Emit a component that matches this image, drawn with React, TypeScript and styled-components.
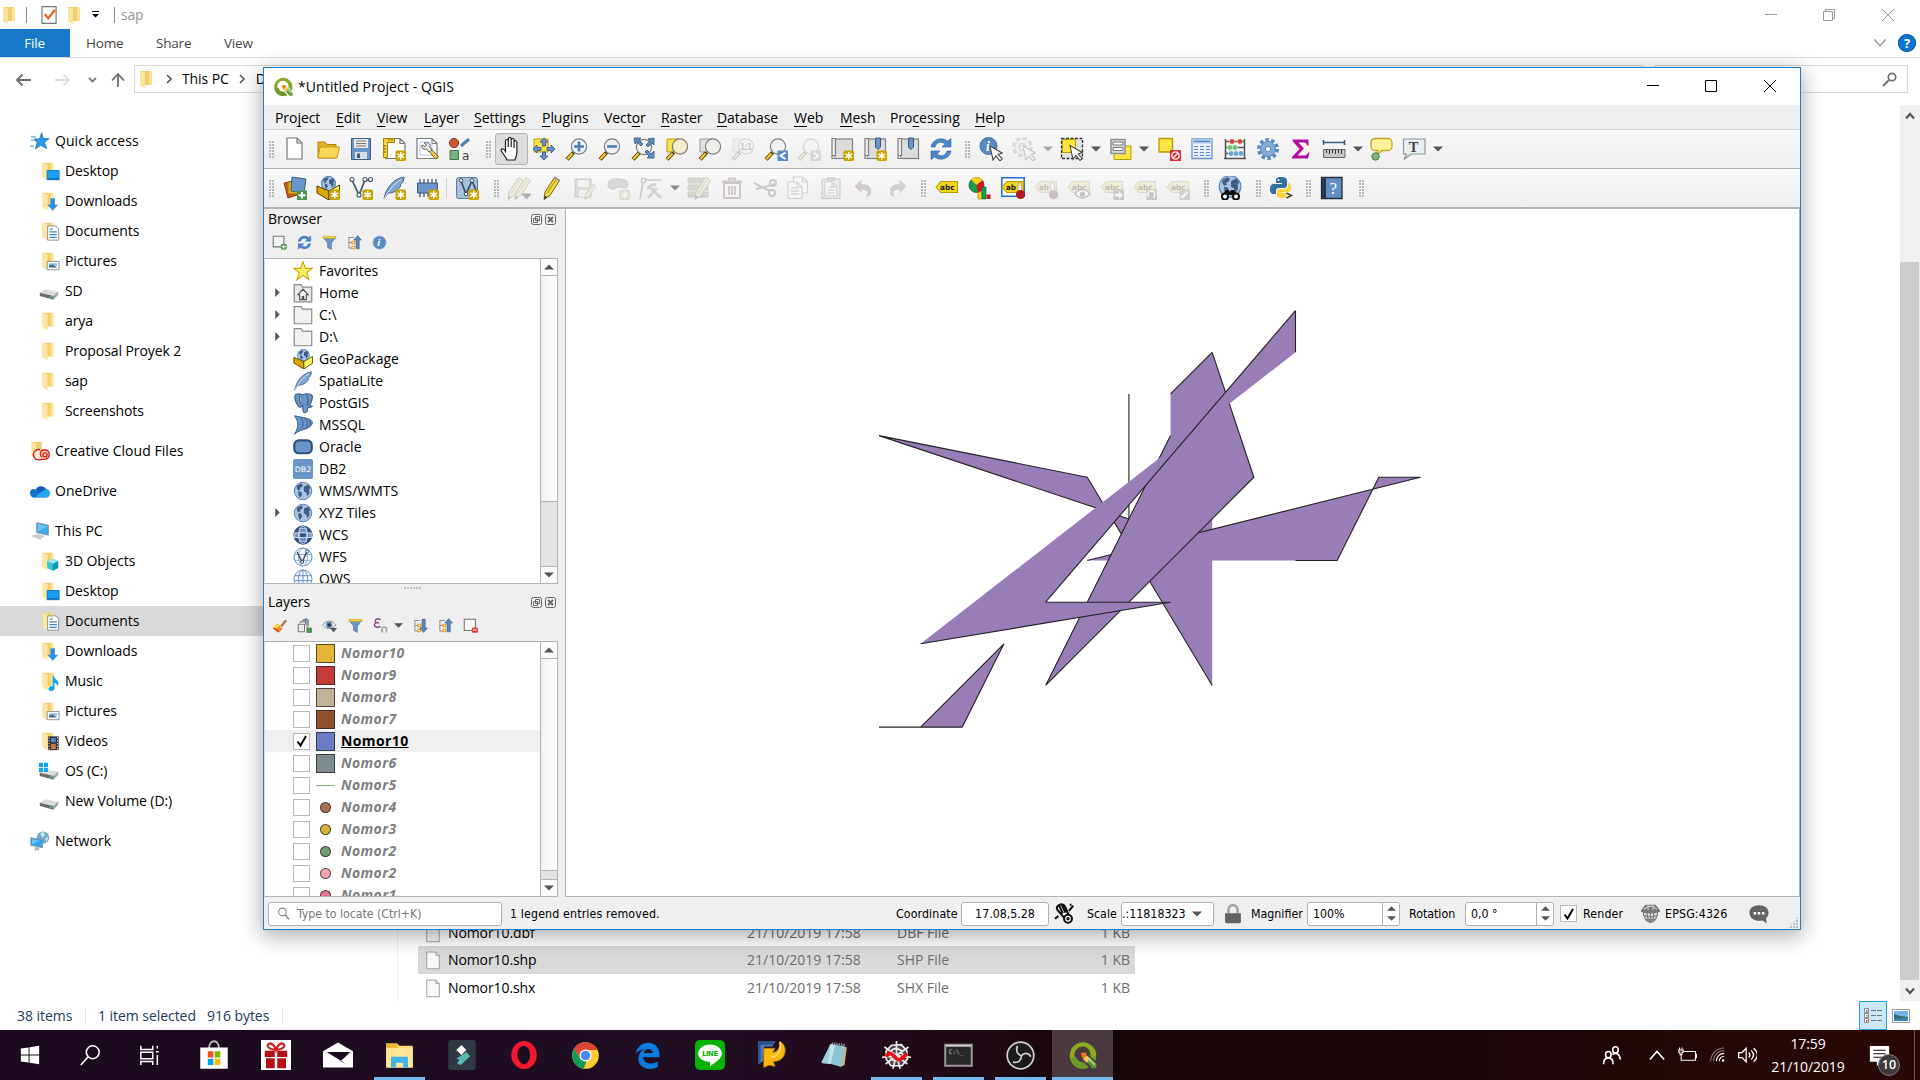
import React from "react";
import styled, { createGlobalStyle, css } from "styled-components";

const ui = `"Open Sans", "Noto Sans", sans-serif`;
const small = `"DejaVu Sans Condensed", "DejaVu Sans", sans-serif`;

const GlobalStyle = createGlobalStyle`
  * { box-sizing: border-box; }
  html, body { margin: 0; padding: 0; overflow: hidden; background: #fff; }
  svg { display: block; flex: none; }
`;

/* ---------- icon drawings (24 x 24 unless noted) ---------- */

const Star = () => (
  <g>
    <rect x="13.5" y="13.5" width="10.5" height="10.5" rx="1.8" fill="#c8a200" />
    <path d="M18.75 15v7.5M15.4 16.9l6.7 3.8M15.4 20.7l6.7-3.8" stroke="#fff" strokeWidth="1.5" />
  </g>
);
const Glass = ({ cx = 14, cy = 9.5, r = 7.6, fill = "#f2f2f0" }: { cx?: number; cy?: number; r?: number; fill?: string }) => (
  <g>
    <path d="M8.5 15.5L2 22.5" stroke="#3a2d00" strokeWidth="4" />
    <path d="M7.6 16.4L2.2 22.2" stroke="#f5c62c" strokeWidth="2.4" />
    <circle cx={cx} cy={cy} r={r} fill={fill} stroke="#7c7c7c" strokeWidth="1.2" />
  </g>
);
const Pencil = () => (
  <g>
    <path d="M5 16L14.5 1.5l5 3L10 19.5l-6 4z" fill="#f3dc3c" stroke="#6b6222" strokeWidth="1" />
    <path d="M7 17.5L16.5 3" stroke="#b79a12" strokeWidth="1.3" />
    <path d="M4 23.5l.7-4 2.4 1.6z" fill="#333" />
    <path d="M14.5 1.5l5 3" stroke="#999" strokeWidth="2" />
  </g>
);
const Globe = ({ cx = 12, cy = 12, r = 10.5 }: { cx?: number; cy?: number; r?: number }) => (
  <g>
    <circle cx={cx} cy={cy} r={r} fill="#a9c4e0" stroke="#5c84b1" strokeWidth="1.2" />
    <g transform={`translate(${cx - r} ${cy - r}) scale(${r / 10})`} fill="#3c5d86">
      <path d="M3 4l5-2.5 2 1.5-1.5 2.5-2 1 .5 2-2.5.5L3 7z" />
      <path d="M4.5 10l3.5 1 1 3-2.5 4-1.5-3z" />
      <path d="M11 5l5-2.5 2.5 4L17 8l.5 4-2.5 4-1.5-4.5-2.5-1z" />
    </g>
  </g>
);
const Tag = ({ text = "abc", y = 6 }: { text?: string; y?: number }) => (
  <g>
    <path d={`M1 ${y + 5}l5-5.5h16.5v11H6z`} fill="#f2d71c" stroke="#b99b00" strokeWidth="1.1" />
    <text x="5" y={y + 7.8} fontSize="7.6" fontWeight="700" fontFamily="DejaVu Sans, sans-serif" fill="#222" textLength={text === "abc" ? 14.5 : 10} lengthAdjust="spacingAndGlyphs">{text}</text>
  </g>
);
const Page = ({ x = 4, y = 1, w = 15, h = 21 }: { x?: number; y?: number; w?: number; h?: number }) => (
  <path d={`M${x} ${y}h${w - 5}l5 5v${h - 5}h-${w}zM${x + w - 5} ${y}v5h5`} fill="#fff" stroke="#777" strokeWidth="1.2" />
);
const Book = () => (
  <g>
    <rect x="4.5" y="2" width="18" height="19.5" fill="#dcdcdc" stroke="#808080" strokeWidth="1.2" />
    <path d="M2 1.5h3.5v17H2z M2 18.5v3h4" fill="#eee" stroke="#808080" strokeWidth="1.2" />
  </g>
);
const Folder = () => (
  <g>
    <path d="M5 3h11v15H5z" fill="#f1cf71" />
    <path d="M5 3l5.5 2v17L5 19z" fill="#fde6a0" />
    <path d="M14 4h3v14h-3z" fill="#ffe492" />
  </g>
);
const Disk = () => (
  <g>
    <path d="M2 14l6-4 14 2.5-5 5z" fill="#dcdcdc" />
    <path d="M2 14l15 3.5v4L2 17.500z" fill="#6d6d6d" />
    <path d="M17 17.500l5-5v3.500l-5 5.500z" fill="#a2a2a2" />
    <path d="M13 18.600h2.500" stroke="#47e05d" strokeWidth="1.4" />
  </g>
);
const QLogo = () => (
  <g>
    <path d="M12.500 1a11 11 0 1 0 4.500 21l-3.600-4.200A6.700 6.700 0 1 1 18.700 11.500l4.600 1.800A11 11 0 0 0 12.500 1z" fill="#8bab20" />
    <path d="M2 14a11 11 0 0 0 15 8l-3.600-4.200A6.700 6.700 0 0 1 6.500 13z" fill="#6a9a27" />
    <path d="M17.500 11.500l5 5a11 11 0 0 0 .8-4z" fill="#7ba428" />
    <path d="M15 17l3-3.500 5.500 5.500v3.500h-3.500z" fill="#589632" />
    <path d="M10.500 10l4.500-.5.500 3-3 2.500z" fill="#ee7913" />
    <path d="M12.500 15l3-3 3 2.500-3 3.500z" fill="#f8c95a" />
    <path d="M16.500 15.500l1.300-1.500 5 5-1 1.500z" fill="#a8c77c" />
  </g>
);
const Arrows = () => <path d="M12 1l4 4h-2.500v4h-3V5H8zM12 23l4-4h-2.500v-4h-3v4H8zM1 12l4-4v2.500h4v3H5V16zM23 12l-4-4v2.500h-4v3h4V16z" fill="#6a95c8" stroke="#3c5d86" strokeWidth=".9" />;
const Refresh = () => (
  <g fill="#4c86c6" stroke="#2f66a5" strokeWidth=".6">
    <path d="M2 10C3 3 12-1 18.500 4L22 1.500V10h-9l3-3C12 4 7.500 5 6 10z" />
    <path d="M22 14c-1 7-10 11-16.500 6L2 22.500V14h9l-3 3c4 3 8.500 2 10-3z" />
  </g>
);
const Cursor = ({ t = "" }: { t?: string }) => <path transform={t} d="M11 9l3 14 3-4 4 5 2.200-2-4-4.500 4-1.500z" fill="#fff" stroke="#444" strokeWidth="1.100" />;
const Funnel = () => (
  <g>
    <path d="M2 4h20l-7 9v10l-6-3v-7z" fill="#6a95c8" stroke="#4d6f97" />
    <path d="M2 2h20v3.500H2z" fill="#f3d63a" stroke="#b69a18" strokeWidth=".8" />
  </g>
);
const TreeArrow = ({ down }: { down?: boolean }) => (
  <g>
    <path d="M3 3v18M3 4h8M3 12h7M3 21h8" stroke="#8a8a8a" strokeWidth="1.500" fill="none" />
    <path d="M8 10h4v4H8zM8 18h4v4H8z" fill="#fff" stroke="#f09a1a" strokeWidth="1.800" />
    <path transform={down ? "rotate(180 17 12)" : ""} d="M17 1l6 7h-3.500v14h-5V8H11z" fill="#5a8ac4" stroke="#34587f" />
  </g>
);
const Feather = () => (
  <g>
    <path d="M2 23C4 12 11 3 22 1c0 5-2 6-4 8 1 0 1 1 0 2-4 5-8 6-12 6z" fill="#7fa5d0" stroke="#3c5d86" />
    <path d="M2 23C6 15 12 8 19 3" stroke="#dce8f4" fill="none" />
  </g>
);
const VecLine = () => (
  <g fill="none" stroke="#44546a" strokeWidth="1.700">
    <path d="M3 4l7 15 6-15h4" />
    <g fill="#fff" strokeWidth="1.100"><circle cx="3" cy="3.500" r="2" /><circle cx="10" cy="19" r="2" /><circle cx="16" cy="3.500" r="2" /><circle cx="21.500" cy="3.500" r="2" /></g>
  </g>
);

const icons: Record<string, React.ReactNode> = {
  folder: <Folder />,
  desktopF: <g><Folder /><rect x="10" y="11.500" width="13" height="10" fill="#18a0f4" stroke="#1173bd" /><path d="M11 20.500h11" stroke="#0a5ea0" /></g>,
  downloads: <g><Folder /><path d="M13.500 9h5v7h3.500l-6 6.500-6-6.500h3.500z" fill="#3091e0" /></g>,
  documents: <g><Folder /><path d="M10.500 6.500h9l3 3V22h-12z" fill="#fff" stroke="#8b8b8b" /><path d="M13 10h3M12.500 13h8M12.500 16h8M12.500 19h8" stroke="#3d88c7" strokeWidth="1.300" /></g>,
  pictures: <g><Folder /><path d="M10 12.500h13v9H10z" fill="#fff" stroke="#8b8b8b" /><path d="M12 14.500h9v2.500h-9z" fill="#7fb9e8" /><path d="M12 17l4-1 5 3H12z" fill="#35678c" /></g>,
  music: <g><Folder /><path d="M17 6c.5 4 5 4.500 5.500 8.500-.5 2-1 2.500-1.500 3 0-3-2-3.500-3-4v6.500c0 3.500-6.500 4-6.500.500 0-2.500 3-3.500 4.500-2.500V6z" fill="#12a2f3" /></g>,
  videos: <g><Folder /><path d="M11 7h11.500v15H11z" fill="#262626" /><path d="M14 8.500h5.500v5H14z" fill="#4d88cf" /><path d="M14 15h5.500v6H14z" fill="#c4793d" /><path d="M12.200 8v14M21.200 8v14" stroke="#fff" strokeDasharray="1.500 1.500" /></g>,
  objects3d: <g><Folder /><path d="M16 9.500l6 2.500v7.500l-6 3-6-3V12z" fill="#3bc4d8" /><path d="M16 15v7.500l6-3V12z" fill="#1796b4" /><path d="M10 12l6-2.500 6 2.500-6 3z" fill="#9ceaf2" /></g>,
  disk: <Disk />,
  diskOs: <g><Disk /><path d="M1 3h4.500v4.500H1zM6.500 3H11v4.500H6.500zM1 8.500h4.500V13H1zM6.500 8.500H11V13H6.500z" fill="#14a7ee" /></g>,
  quick: <g><path d="M14 2l2 7h7l-5.500 4.500L20 21l-7-4-6.500 4.500 2-7.500L5 9.500h6.500z" fill="#2b9be6" stroke="#1878c4" /><path d="M1 7h6M1 11h5M0 18h5" stroke="#57b1ec" strokeWidth="1.500" /></g>,
  creative: <g><path d="M2 1h12v16H2z" fill="#f1cf71" /><path d="M2 1l5.500 2v18L2 18z" fill="#fde6a0" /><g fill="none" stroke="#e0211b" strokeWidth="1.700"><path d="M12 10.500a6.200 6.200 0 1 0 1 11.500h5a5.800 5.800 0 0 0 0-11.500c-4 0-5.500 2-5.500 5.500 0 2 1 3 2 3.500" fill="#ffe8d8" /><circle cx="18" cy="16.500" r="2.600" /></g></g>,
  onedrive: <g><path d="M7 10a7 6.500 0 0 1 12.500-.5L12 17z" fill="#0f5bb5" /><path d="M0 14.500C0 11 3 9 6 10l9 6-10 4c-3 0-5-2.500-5-5.500z" fill="#1273d0" /><path d="M19 9.500c3.500 0 5 2.500 5 5.500s-2 5-4.500 5H5l8.500-7z" fill="#28a4ea" /></g>,
  pc: <g><path d="M8 2l14 3v12L8 14z" fill="#3fa8ec" stroke="#7d8b96" /><path d="M9.500 4l11 2.500-11 6z" fill="#70c5f7" /><path d="M1 18l8-2.500 9 2.500-6 4.500z" fill="#c7cdd2" /></g>,
  network: <g><circle cx="15.500" cy="8" r="7.500" fill="#78a8c7" /><path d="M12 3l4-2 2 4-3 3zM18 9l4-2-2 6z" fill="#c2e6ec" /><path d="M1 8l14 3v9L1 17z" fill="#2fa4ec" stroke="#7d8b96" /><path d="M2.500 10l9 2-9 4z" fill="#6cc4f7" /><path d="M7 19l4 1v3H5z" fill="#aab4bb" /></g>,
  file: <g><path d="M4.500 2.500h11l4 4v16h-15z" fill="#f7f9fb" stroke="#8f8f8f" /><path d="M15.500 2.500v4h4" fill="none" stroke="#8f8f8f" /></g>,
  checkdoc: <g><path d="M3.500 2h17v20h-17z" fill="#fafafa" stroke="#777" strokeWidth="1.400" /><path d="M7 11l4 5 8-10" fill="none" stroke="#ef5a13" strokeWidth="2.600" /></g>,

  newp: <Page />,
  open: <g><path d="M2 5h7l2 2.500h9V21H2z" fill="#e3b324" stroke="#a88308" /><path d="M4 10h19.500L21 21H2z" fill="#fcd757" stroke="#c29a1a" /></g>,
  save: <g><path d="M2.500 1.500h19v21h-19z" fill="#6a95c8" stroke="#3c5d86" /><path d="M5 2h14v9H5z" fill="#e9e9e9" /><path d="M7 4h10M7 6.500h10M7 9h10" stroke="#777" /><path d="M6 15h12v7H6z" fill="#d9dce0" /><path d="M8 16.500h3V21H8z" fill="#3c5d86" /></g>,
  layout: <g><Page x={4} y={1.500} w={19} h={20} /><path d="M1.500 1.500h11v4h-7v15h-4z" fill="#f7d23a" stroke="#a88308" /><path d="M7 2v2M10 2v2M2 9h2M2 12h2M2 15h2" stroke="#6f5800" /><Star /></g>,
  wrench: <g><Page x={2} y={1.500} w={20} h={20} /><path d="M5 5h12v13H5z" fill="none" stroke="#b7cbe6" /><path d="M13 13l7.500 9 3-2-8-9z" fill="#f2c94c" stroke="#7d641a" /><path d="M9 6c4-1.500 7 1 6 4l2 3-3 2-3-3c-3 1-5-1-4-4l3 1.500 1.500-1.500z" fill="#e2e2e2" stroke="#666" /></g>,
  style: <g><circle cx="6" cy="6" r="4.600" fill="#cc5a36" stroke="#8a3518" /><path d="M13 9l8-7" stroke="#5580b6" strokeWidth="3.200" /><path d="M2 13.500h8.500v9H2z" fill="#7bb085" stroke="#3f7a4a" /><text x="14" y="22.500" fontSize="12" fontFamily="DejaVu Sans, sans-serif" fill="#444">a</text></g>,
  hand: <path d="M8 23c-1-3-5-7-6-10 1-2 3-1 4.500 1.500V4c0-2 2.800-2 2.800 0V2c0-2 2.900-2 2.900 0v1c0-2 2.900-2 2.900 0v2c0-2 2.800-1.500 2.800.5V15c0 3-1 5-2 8z M9.300 4v6M12.200 3v7M15.100 4.500V11" fill="#fff" stroke="#222" strokeWidth="1.200" />,
  panto: <g><path d="M2 2h14v13H2z" fill="#fbe04c" stroke="#b99b00" /><Arrows /></g>,
  zoomin: <g><Glass fill="#eef2f7" /><path d="M14 4.500v10M9 9.500h10" stroke="#4c7db8" strokeWidth="2.600" /></g>,
  zoomout: <g><Glass fill="#eef2f7" /><path d="M9 9.500h10" stroke="#4c7db8" strokeWidth="2.600" /></g>,
  zoomfull: <g><Glass cx={13} cy={10} /><path d="M3 1h7L8 3l4 4-2 2-4-4-2 2zM23 1v7l-2-2-4 4-2-2 4-4-2-2zM23 21h-7l2-2-4-4 2-2 4 4 3-3z" fill="#5f8dc4" stroke="#3c5d86" strokeWidth=".9" /></g>,
  zoomsel: <g><path d="M2 2h12v13H2z" fill="#fbe04c" stroke="#b99b00" /><Glass fill="#f3eecb" cx={15} /></g>,
  zoomlay: <g><path d="M2 2h12v13H2z" fill="#e2e2e2" stroke="#999" /><Glass fill="#eeeeea" cx={15} /></g>,
  native: <g><path d="M2 2h12v13H2z" fill="#ddd" stroke="#999" /><Glass cx={15} /><text x="8.500" y="13" fontSize="9.500" fontWeight="700" fontFamily="DejaVu Sans Condensed, sans-serif" fill="#555" textLength="13">1:1</text></g>,
  zoomlast: <g><Glass /><path d="M13.500 13.500H24V24H13.500z" fill="#5a8ac4" /><path d="M21.500 15.500l-5 3.200 5 3.300" stroke="#fff" strokeWidth="1.800" fill="none" /></g>,
  zoomnext: <g><Glass /><path d="M13.500 13.500H24V24H13.500z" fill="#888" /><path d="M16.500 15.500l5 3.200-5 3.300" stroke="#fff" strokeWidth="1.800" fill="none" /></g>,
  book1: <g><Book /><Star /></g>,
  book2: <g><Book /><path d="M12.500 1h5v9l-2.500 2.500-2.500-2.500z" fill="#6a95c8" stroke="#34587f" /><Star /></g>,
  book3: <g><Book /><path d="M12.500 1h5v9l-2.500 2.500-2.500-2.500z" fill="#6a95c8" stroke="#34587f" /></g>,
  refresh: <Refresh />,
  identify: <g><circle cx="9.500" cy="9" r="8.500" fill="#5a8ac4" stroke="#3c6da8" /><text x="7" y="14" fontSize="14" fontStyle="italic" fontWeight="700" fontFamily="Liberation Serif, serif" fill="#fff">i</text><Cursor /></g>,
  action: <g><circle cx="10.500" cy="10" r="9" fill="none" stroke="#888" strokeWidth="2.600" strokeDasharray="4.500 2.569" /><circle cx="10.500" cy="10" r="7.500" fill="#eee" stroke="#888" /><circle cx="10.500" cy="10" r="4.500" fill="#999" /><path d="M9 7l5 3-5 3z" fill="#fff" /><Cursor /></g>,
  select: <g><path d="M1.500 1.500h21v20h-21z" fill="#e3e3e3" stroke="#333" strokeWidth="1.300" strokeDasharray="3 1.500" /><path d="M2.500 2.500h13v13h-13z" fill="#fde545" stroke="#b99b00" /><Cursor t="translate(-1 -.5)" /></g>,
  selval: <g><path d="M6 9h17v13.500H6z" fill="#fde545" stroke="#b99b00" /><path d="M3 2.500h14v14H3z" fill="#ddd" stroke="#8a9096" strokeWidth="1.500" /><path d="M5 5h10v3H5zM5 10.500h10v3H5z" fill="#fff" stroke="#777" /></g>,
  deselect: <g><path d="M2 1.500h13.500V15H2z" fill="#fde545" stroke="#b99b00" strokeWidth="1.300" /><path d="M13 13h11v11H13z" fill="#d83333" /><circle cx="18.500" cy="18.500" r="3.700" fill="none" stroke="#fff" strokeWidth="1.300" /><path d="M16 21l5-5" stroke="#fff" strokeWidth="1.300" /></g>,
  table: <g><path d="M2 2h20v19.500H2z" fill="#e9f0f8" stroke="#6a95c8" strokeWidth="1.300" /><path d="M2 2h20v4.500H2z" fill="#a9c9ea" /><path d="M4 9.500h4M10 9.500h4M16 9.500h4M4 12.500h4M10 12.500h4M16 12.500h4M4 15.500h4M10 15.500h4M16 15.500h4M4 18.500h4M10 18.500h4M16 18.500h4M4 4.300h16" stroke="#5a8ac4" strokeWidth="1.200" /></g>,
  abacus: <g><path d="M2.500 2v20M21.500 2v20M1 21.500h22M3 4.500h18M3 10.500h18M3 16.500h18" stroke="#555" strokeWidth="1.500" /><g stroke="#fff" strokeWidth=".5"><g fill="#dc3d3d"><circle cx="9" cy="4.500" r="2.700" /><circle cx="17" cy="4.500" r="2.700" /></g><g fill="#6ac46e"><circle cx="7" cy="10.500" r="2.700" /><circle cx="12" cy="10.500" r="2.700" /></g><g fill="#66a3cf"><circle cx="8" cy="16.500" r="2.700" /><circle cx="13" cy="16.500" r="2.700" /><circle cx="18" cy="16.500" r="2.700" /></g></g></g>,
  gear: <g><circle cx="12" cy="12" r="9" fill="none" stroke="#5a8ac4" strokeWidth="4" strokeDasharray="3.400 2.254" /><circle cx="12" cy="12" r="7.500" fill="#86abd8" stroke="#5a8ac4" /><circle cx="12" cy="12" r="2.600" fill="#fff" stroke="#5a8ac4" /></g>,
  sigma: <path d="M3.500 2.500h16v6h-1.500c-.5-2.500-1.500-3-3.500-3H9.500l5.500 6-6.500 7h7c2 0 2.800-.8 3.500-3h1.500l-1.500 6h-16v-1.500l7.500-8L3.500 4z" fill="#b0119c" />,
  measure: <g><path d="M1.500 5.500h21M1.500 3v5M22.500 3v5" stroke="#3c5d86" strokeWidth="1.600" /><path d="M1.500 12.500h21.500v8H1.500z" fill="#c9c9c9" stroke="#666" /><path d="M4.500 13v3M7.500 13v4M10.500 13v3M13.500 13v4M16.500 13v3M19.500 13v4" stroke="#333" /></g>,
  tip: <g><path d="M6 1.500h13a4 4 0 0 1 4 4v4a4 4 0 0 1-4 4h-6l-6 5 2-5H6a4 4 0 0 1-4-4v-4a4 4 0 0 1 4-4z" fill="#fdf29a" stroke="#c2a31c" strokeWidth="1.300" /><circle cx="6.500" cy="19.500" r="3.700" fill="#7bb57a" stroke="#477f47" /></g>,
  textann: <g><path d="M1.500 2h21.500v15H9l-7 5.500L4.500 17h-3z" fill="#e8eff3" stroke="#8e979c" strokeWidth="1.200" /><text x="6.800" y="14.500" fontSize="14.500" fontWeight="700" fontFamily="Liberation Serif, serif" fill="#444">T</text></g>,

  addlayer: <g><path d="M1 7l9-2 4 14-9 3z" fill="#cf5b1e" stroke="#8d3a0d" /><path d="M5 6h11v12H5z" fill="#eaaa14" stroke="#94690a" /><path d="M9 1l14 2-2 14-13-2z" fill="#6a95c8" stroke="#3c5d86" /><path d="M14 14.500h10V24H14z" fill="#4f9450" /><path d="M19 16v6.500M15.700 19.200h6.600" stroke="#fff" strokeWidth="1.900" /></g>,
  geopack: <g><Globe cx={12.500} cy={7.500} r={7} /><path d="M1 10l12 5v9L1 17z" fill="#dca800" stroke="#4f3f00" /><path d="M13 15l10.500-6v8L13 24z" fill="#fff06a" stroke="#4f3f00" /></g>,
  geopackS: <g><Globe cx={12.500} cy={7.500} r={7} /><path d="M1 10l12 5v9L1 17z" fill="#dca800" stroke="#4f3f00" /><path d="M13 15l10.500-6v8L13 24z" fill="#fff06a" stroke="#4f3f00" /><Star /></g>,
  shape: <g><VecLine /><Star /></g>,
  featherS: <g><Feather /><Star /></g>,
  feather: <Feather />,
  chip: <g><path d="M5 3v18M9 3v18M13 3v18M17 3v18M21 3v18" stroke="#44546a" strokeWidth="1.300" /><path d="M2.500 7h20v10h-20z" fill="#6a95c8" stroke="#3c5d86" /><Star /></g>,
  virtual: <g><rect x="1.500" y="1.500" width="21" height="21" rx="2" fill="#a6c1df" stroke="#5a7ca6" /><path d="M6 5l5 13 6-13 4 9" fill="none" stroke="#33475f" strokeWidth="1.600" /><g fill="#fff" stroke="#33475f"><circle cx="6" cy="4.500" r="1.800" /><circle cx="11" cy="18" r="1.800" /><circle cx="17" cy="4.500" r="1.800" /></g><Star /></g>,
  pencils: <g><g transform="translate(4 0)"><Pencil /></g><g transform="translate(-3 0)"><Pencil /></g><path d="M15 18h9l-4.500 5z" fill="#000" stroke="#000" /></g>,
  pencil: <Pencil />,
  saveed: <g><path d="M2 3h16v18H2z" fill="#999" stroke="#555" /><path d="M5 4h11v7H5zM6 14h8v7H6z" fill="#eee" /><g transform="translate(9 7) scale(.7)"><Pencil /></g></g>,
  addfeat: <g><path d="M2 8c1-7 10-5 12-5s9 1 8 6-6 2-9 2-4 3-7 2-4-2-4-5z" fill="#888" stroke="#555" /><Star /></g>,
  vertex: <g fill="none" stroke="#555" strokeWidth="1.500"><path d="M4 6L1 23M6 4h16" /><path d="M2.500 2.500h4v4h-4z" /><path d="M9 22L18 12" strokeWidth="3" stroke="#888" /><path d="M12 12l10 10" strokeWidth="3" stroke="#777" /><path d="M9 13c1-4 5-5 8-4" strokeWidth="3" stroke="#777" /></g>,
  multi: <g><path d="M1 2h20v5H1zM1 9h20v5H1zM1 16h20v5H1z" fill="#8a8d50" stroke="#666" /><g transform="translate(4 0)"><Pencil /></g></g>,
  trash: <g fill="none" stroke="#8a4040" strokeWidth="1.800"><path d="M4 7h16v15H4zM2 5.500h20M9 5V2.500h6V5M9 10v9M12 10v9M15 10v9" /></g>,
  cut: <g fill="none" stroke="#555" strokeWidth="2"><path d="M1 7l16 8M3 13l19-5" /><circle cx="19" cy="17" r="3" /><circle cx="20" cy="7" r="3" /></g>,
  copy: <g><Page x={7.500} y={1} w={14} h={16} /><Page x={2} y={6} w={14} h={16.500} /><path d="M5 12h6M5 15h8M5 18h8" stroke="#555" /></g>,
  paste: <g><path d="M3 3h18v19.500H3z" fill="#ccc" stroke="#555" /><path d="M8 1h8v4H8z" fill="#777" /><Page x={6} y={6} w={12} h={14} /><path d="M8.500 11h6M8.500 14h7M8.500 17h7" stroke="#555" /></g>,
  undo: <path d="M2.500 10l7-6.500v4.500c8 0 11 3.500 9 11.500-1-1-2 2-5 2 4-5 2-8-4-8v4z" fill="#8d5a4d" />,
  redo: <path transform="translate(24 0) scale(-1 1)" d="M2.500 10l7-6.500v4.500c8 0 11 3.500 9 11.500-1-1-2 2-5 2 4-5 2-8-4-8v4z" fill="#5c7a6c" />,
  abc: <Tag />,
  diagram: <g><circle cx="8.500" cy="9" r="7.500" fill="#13a14b" stroke="#333" strokeWidth=".7" /><path d="M8.500 9L3 3.500A7.500 7.500 0 0 1 14.500 4.500z" fill="#fcd116" /><path d="M8.500 9l6-4.500a7.500 7.500 0 0 1-5 12z" fill="#d3191c" /><path d="M10 16h4v7h-4z" fill="#fcd116" stroke="#a17f00" strokeWidth=".6" /><path d="M14 11h4v12h-4z" fill="#13a14b" stroke="#064" strokeWidth=".6" /><path d="M18.500 18.500h4V23h-4z" fill="#d3191c" /></g>,
  abpin: <g><path d="M.8 1.800h22.400v18.500H.8z" fill="#fff" stroke="#1b6fd8" strokeWidth="1.500" /><Tag text="ab" /><path d="M17 8l3-2 1 10h-4z" fill="#eee" stroke="#888" strokeWidth=".6" /><circle cx="19.500" cy="18.500" r="4.600" fill="#b3181c" /></g>,
  abpinG: <g><Tag text="ab" /><path d="M16 8l4-2 1 10h-4z" fill="#eee" stroke="#888" /><circle cx="19.500" cy="18.500" r="4.600" fill="#8a2d3d" /></g>,
  abeye: <g><Tag /><path d="M8 18c4-6 11-6 15 0-4 5-11 5-15 0z" fill="#fff" stroke="#444" strokeWidth="1.500" /><circle cx="15.500" cy="18" r="2.600" fill="#444" /></g>,
  abmove: <g><Tag /><path d="M13.500 13.500H24V24H13.500z" fill="#555" /><path d="M15 17.500h4V15l4 4-4 4v-2.500h-4z" fill="#fff" /></g>,
  abrot: <g><Tag /><path d="M13.500 13.500H24V24H13.500z" fill="#555" /><path d="M16 21a3.500 3.500 0 1 1 4 .5" stroke="#fff" strokeWidth="1.700" fill="none" /></g>,
  abedit: <g><Tag /><path d="M13.500 13.500H24V24H13.500z" fill="#77774f" /><path d="M15.500 22l6-6" stroke="#fff" strokeWidth="2.400" /></g>,
  metasearch: <g><Globe cx={12} cy={10.500} r={10.800} /><path d="M8 14h3l1 2 1-2h3l4.500 6h-4L13 19h-2l-3.500 1h-4z" fill="#111" /><circle cx="7" cy="20.500" r="3" fill="#fff" stroke="#111" strokeWidth="2" /><circle cx="18" cy="20.500" r="3" fill="#fff" stroke="#111" strokeWidth="2" /></g>,
  python: <g><path d="M11 1c-5 0-5 2-5 4v2h6v1H4c-3 0-4 2-4 5s1 5 3.500 5H6v-3c0-2 1-3 3-3h5c2 0 3-1 3-3V5c0-3-2-4-6-4z" fill="#356f9f" /><circle cx="8.500" cy="4" r="1" fill="#fff" /><path d="M11 22c5 0 6-2 6-4v-1h-6v-1h6c3 0 4-2 4-5 0-2-1-4-3-4v3c0 2-1 3-3 3h-5c-2 0-3 1-3 3v3c0 2 1 3 4 3z" fill="#fdd13a" /><path d="M16.500 17l5 2.500-5 2.500" stroke="#444" strokeWidth="1.500" fill="none" /></g>,
  help: <g><path d="M1.500 1.500h20.500v21H1.500z" fill="#5f8fc6" stroke="#222c38" strokeWidth="1.300" /><path d="M1.500 1.500H6v21H1.500z" fill="#25384f" /><text x="9.500" y="18" fontSize="17" fontFamily="Liberation Serif, serif" fill="#fff">?</text></g>,

  addSel: <g><path d="M2 2h17v17H2z" fill="#f4f4f4" stroke="#777" strokeWidth="1.700" /><rect x="14" y="14" width="9.500" height="9.500" rx="3" fill="#4f9450" /><path d="M18.700 15.500v6.500M15.500 18.700H22" stroke="#fff" strokeWidth="1.700" /></g>,
  funnel: <Funnel />,
  treeUp: <TreeArrow />,
  treeDown: <TreeArrow down />,
  info: <g><circle cx="12" cy="12" r="10.500" fill="#5a8ac4" stroke="#8eb0da" /><text x="8.500" y="18" fontSize="17" fontStyle="italic" fontWeight="700" fontFamily="Liberation Serif, serif" fill="#fff">i</text></g>,
  brush: <g><path d="M14 12l7-9 2 2-7 9z" fill="#c98a3c" stroke="#7d521c" /><path d="M9 9l8 8-6 6-10-8z" fill="#f08b2c" /><path d="M9 9l3 3-6 7-5-4z" fill="#f6d440" /><path d="M6 16l6 6-2 1-9-7z" fill="#d5432c" /></g>,
  addGroup: <g fill="none" stroke="#777" strokeWidth="1.600"><path d="M2 10h10v12H2zM5 8V6h11v10M9 4V3h9v10" /><path d="M14 11V1M10 5l4-4 4 4" stroke="#4a6f9e" /><rect x="15" y="15" width="9" height="9" rx="2" fill="#4f9450" stroke="none" /></g>,
  eye: <g><path d="M1 11C6 3 17 3 22 11c-5 8-16 8-21 0z" fill="#e8edf2" stroke="#8a8a8a" strokeWidth="1.500" /><circle cx="11.500" cy="11" r="5" fill="#5a82ad" /><circle cx="11.500" cy="11" r="2.200" fill="#1d2c3d" /><path d="M13 16h11l-5.500 7z" fill="#555" /></g>,
  eps: <g><path d="M12 3C7-1 1 3 5 7.500c-6 3-1 10 7 6M5 7.500h5" fill="none" stroke="#8b4b88" strokeWidth="2.400" /><path d="M13 23v-6c0-5 10-5 10 0v6h-3v-6c0-1.500-4-1.500-4 0v6z" fill="#aaa" /></g>,
  removeL: <g><path d="M2 2h18v18H2z" fill="#f4f4f4" stroke="#777" strokeWidth="1.700" /><rect x="14" y="15" width="10" height="8.500" rx="2.500" fill="#e03a3a" /><path d="M16 19.200h6" stroke="#fff" strokeWidth="1.700" /></g>,

  fav: <path d="M12 .8l3 8h8.200l-6.500 5 2.400 8.700L12 17.300l-7.100 5.200 2.400-8.700L.8 8.800H9z" fill="#fdf06a" stroke="#c9a800" strokeWidth="1.300" />,
  home: <g><path d="M1.500 2h8l2 3h11v17.500h-21z" fill="#e8e8e8" stroke="#8a8a8a" strokeWidth="1.500" /><path d="M6 14l6-6.500 6 6.500h-2v6H8v-6z" fill="#fff" stroke="#555" strokeWidth="1.500" /><path d="M10.500 15.500h3V20h-3z" fill="#555" /></g>,
  gfolder: <path d="M1.500 2h8l2 3h11v17.500h-21z" fill="#f1f1f1" stroke="#8a8a8a" strokeWidth="1.400" />,
  postgis: <path d="M3 2c3-2 6-1 8 0 3-1 9-2 12 1 1 4-1 8-3 12l3 1c-2 2-4 1-5 1l-1 5c-2 2-5 2-5-1l-.5-6c-2 2-3 3-5 1C3 11 1 6 3 2zM9 3c-2 3-1 7 0 10M16 2c4 3 2 9 1 13" fill="#6a95c8" stroke="#3c5d86" strokeWidth="1.300" />,
  mssql: <path d="M2 1c8 2 18 2 21 7 1 3-2 6-6 8-6 2-11 3-15 7 5-9 5-14 0-22zM9 3c4 5 4 11 0 14M14 4c4 4 4 9 1 12M19 6c3 3 2 6 0 9" fill="#6a95c8" stroke="#3c5d86" strokeWidth="1.200" />,
  oracle: <rect x="1.500" y="4" width="21" height="15.500" rx="5.500" fill="#6a95c8" stroke="#33527a" strokeWidth="2.600" />,
  db2: <g><rect x="0" y="0" width="24" height="24" rx="2.500" fill="#6a95c8" /><text x="2" y="15" fontSize="9" fontFamily="DejaVu Sans, sans-serif" fill="#fff" textLength="20" lengthAdjust="spacingAndGlyphs">DB2</text></g>,
  globe: <Globe />,
  wcs: <g fill="none" stroke="#c8d8ea" strokeWidth="1"><circle cx="12" cy="12" r="11" fill="#33527a" stroke="#33527a" /><path d="M8 4h8v5H8zM2 10h6v5H2zM16 10h6v5h-6zM8 15h8v5H8z" fill="#6a95c8" /><path d="M1.500 9.500h21M1.500 15h21" /><ellipse cx="12" cy="12" rx="5.500" ry="10.500" /></g>,
  wfs: <g fill="none" stroke="#8fb2da" strokeWidth="1.200"><circle cx="12" cy="12" r="10.800" fill="#f3f7fc" stroke="#5a8ac4" /><path d="M1.500 9h21M2.500 16h19" /><ellipse cx="12" cy="12" rx="5.500" ry="10.500" /><path d="M5 6l6 12 6-13" stroke="#33475f" strokeWidth="1.700" /><circle cx="11" cy="18" r="1.800" fill="#fff" stroke="#33475f" /><circle cx="17" cy="5.500" r="1.800" fill="#fff" stroke="#33475f" /></g>,
  ows: <g fill="none" stroke="#6a95c8" strokeWidth="1.200"><circle cx="12" cy="12" r="10.800" fill="#f5f9fd" /><path d="M1.500 8h21M1.500 14h21M3 19h18M12 1v22" /><ellipse cx="12" cy="12" rx="5.500" ry="10.500" /></g>,

  track: <g fill="#fff" stroke="#111" strokeWidth="2.400"><path d="M5 3c3-3 7-1 8 2l3 7c1 4-4 6-6 3L4 8C3 6 3 4 5 3zM6 3l4 9M9 2l4 9" /><circle cx="16" cy="18" r="4.500" /><path d="M17 9l5-6M18 2h2M1 18l4-3" /><circle cx="16" cy="18" r=".8" /></g>,
  lock: <g><path d="M6.500 11V7a5.500 5.500 0 0 1 11 0v4" fill="none" stroke="#a5a5a5" strokeWidth="3.200" /><path d="M2.500 11h19v10a2 2 0 0 1-2 2h-15a2 2 0 0 1-2-2z" fill="#636363" /></g>,
  crs: <g fill="none" stroke="#777" strokeWidth="1.400"><path d="M3 8c-1 8 4 15 9 15s10-7 9-15" fill="#ddd" /><path d="M0 9L6 1.500h12L24 9c-6 3-18 3-24 0z" fill="#777" /><path d="M4 7l5-4h6l5 4" stroke="#ccc" /><path d="M9 2v6M15 2v6" stroke="#ccc" /><path d="M12 9v14M8 9c-.5 6 1 11 3 14M16 9c.5 6-1 11-3 14M4 14.500c5 2 11 2 16 0M6.500 19c4 1 7 1 11 0" /></g>,
  bubble: <g><path d="M12 1.500c7 0 11.500 3.500 11.500 9 0 3-1.500 5-3 6.500l.8 6.500-5-3.700c-9 1.500-15.800-2.300-15.800-9.300 0-5.500 4.500-9 11.500-9z" fill="#636363" /><path d="M5.500 9.500h3v3h-3zM10.500 9.500h3v3h-3zM15.500 9.500h3v3h-3z" fill="#fff" /></g>,
  lens: <g fill="none" stroke="#8c8c8c" strokeWidth="2.200"><circle cx="10" cy="9" r="7" /><path d="M15 14.500l7 8" strokeWidth="3" /></g>,

  win: <path d="M2 5l8.500-1.200v7.700H2zM11.500 3.600L22 2v9.500H11.500zM2 12.500h8.500v7.700L2 19zM11.500 12.500H22V22l-10.500-1.600z" fill="#fff" />,
  tsearch: <g fill="none" stroke="#fff" strokeWidth="1.700"><circle cx="15" cy="9" r="7" /><path d="M10 14l-8 9" /></g>,
  tview: <g fill="none" stroke="#fff" strokeWidth="1.600"><path d="M2 2v4h13V2M2 9h13v7H2zM2 23v-4h13v4M20 2v3M20 12v11M18.500 8.500h3" /></g>,
  store: <g><path d="M8 7c0-8 8-8 8 0" fill="none" stroke="#bbb" strokeWidth="1.500" /><path d="M1 6h22v17H1z" fill="#fff" /><path d="M7 9h4.500v5H7z" fill="#f25022" /><path d="M12.500 9H17v5h-4.500z" fill="#7fba00" /><path d="M7 15h4.500v5H7z" fill="#00a4ef" /><path d="M12.500 15H17v5h-4.500z" fill="#ffb900" /></g>,
  gift: <g><path d="M0 0h24v24H0z" fill="#fff" /><path d="M3 8.500h8v5H3zM13 8.500h8v5h-8zM4 14.500h7v8H4zM13 14.500h7v8h-7z" fill="#b51015" /><path d="M12 8C5 7 4 4 6.500 3S11 5 12 8c1-3 3-6 5.500-5S19 7 12 8z" fill="none" stroke="#c22" strokeWidth="1.800" /></g>,
  mail: <g><path d="M0 9l12-7 12 7v13H0z" fill="#fff" /><path d="M3 9.500h19l-8 7.500 5 2.500z" fill="#1b0c1f" /></g>,
  explorer: <g><path d="M1 2h9l2 2h11v18H1z" fill="#fddb78" /><path d="M1 2h9l1 4H1z" fill="#efb63a" /><path d="M1 6h22v16H1z" fill="#ffe699" /><path d="M5 22v-9h14v9h-4v-4H9v4z" fill="#3db5ec" /></g>,
  filmora: <g><rect x="1" y="0" width="22" height="24" rx="2.500" fill="#303943" /><path d="M7.500 8l4-4 4 4-4 4z" fill="#fff" /><path d="M7.500 15l8-5.500 3 3.500L11 20l-3-1.500 2-3z" fill="#56b8ae" /></g>,
  opera: <path fillRule="evenodd" d="M12 0a11 12 0 1 0 .1 0zM12 4c-8 1-7 15 0 16 7-1 7-15 0-16z" fill="#f0182d" />,
  chrome: <g><circle cx="12" cy="12" r="11" fill="#fbcc34" /><path d="M2.500 6.500a11 11 0 0 1 19.500 1H12L7.500 14z" fill="#dc4437" /><path d="M2.500 6.500L8 15l5 1-2.500 7A11 11 0 0 1 2.500 6.500z" fill="#119d58" /><circle cx="12" cy="12" r="5" fill="#fff" /><circle cx="12" cy="12" r="4" fill="#4a8af4" /></g>,
  edge: <path d="M2 11C3.500 5 7 1.500 12.500 1.500c6.500 0 10 5 9.500 12H8.500c0 5.500 7 6.500 12 3.500v4.500C12.500 25.500 3.500 21.500 4.500 13.500 5 10 7 7.800 9 6.800 6.500 7 3.500 8.500 2 11zM9 10h7.500C15.800 5.500 9.600 5.500 9 10z" fill="#0c7bdc" />,
  line: <g><rect width="24" height="24" rx="4" fill="#05b305" /><path d="M12 3.500c6 0 9.500 3.500 9.500 7.500S16 18 12 21v-3.500C6 17 2.500 14.500 2.500 11S6 3.500 12 3.500z" fill="#fff" /><text x="5.500" y="13" fontSize="5.500" fontWeight="700" fontFamily="DejaVu Sans, sans-serif" fill="#05b305" textLength="13">LINE</text></g>,
  poweriso: <g><path d="M1 .5h14.500l-3 4H6l-1 12-4 3z" fill="#4a7fbd" /><path d="M1 .5h14.500l-2 2.500H3v14l-2 2.500z" fill="#2a548e" /><path d="M5.500 6h9.500l-2 3.500c4-.5 6-3.500 6-9 4 2 5 6 4 10-1.500 5-6 6.500-9.500 6.500l1.500 4-5-1-4.500 2z" fill="#fbb80e" stroke="#a8690a" strokeWidth=".6" /><path d="M19 .5c1 8-1 12-7 13" stroke="#ffe08a" fill="none" strokeWidth="1.200" /></g>,
  notes: <g><path d="M19 4l4 1.500-2 15-4 2z" fill="#c4b68c" /><path d="M9 2.500L21 4.500 17.500 22 7 19z" fill="#8cc4d4" /><path d="M9 2.500l4 .7-4 16.500-7-.7z" fill="#c2e4ec" /><path d="M9 2.500L1 18.500l6 .5z" fill="#9ed0dd" /><path d="M10 2l12 1.500" stroke="#999" strokeWidth="1.800" strokeDasharray="1.200 .8" /></g>,
  spyder: <g fill="none" stroke="#ececec" strokeWidth="1.400"><path d="M8 3.500L16 3l4.500 5 .5 7-4.500 5.500-9 0L3.500 15 3.500 8z" fill="#4a4548" /><path d="M12 0v12L9 23M12 12l3 11M12 12L2 5M12 12L22 5M12 12L0 13.500M12 12l12 1.500M12 12L3 19M12 12l9 7M8.500 7L12 6l4 2 1.500 4-2 4H9L6.500 13z" /><path d="M3.500 13c3-5 5-2 7 0s4 4 6 1l4.500-3.500" stroke="#ee0a14" strokeWidth="3" /></g>,
  cmd: <g><path d="M1 3h22v17.500H1z" fill="#292929" stroke="#999" strokeWidth="1.600" /><path d="M1.500 4h21" stroke="#ccc" strokeWidth="1.500" /><text x="4" y="10.500" fontSize="5" fontFamily="DejaVu Sans Mono, monospace" fill="#ccc">C:\_</text></g>,
  obs: <g fill="none" stroke="#d0d0d0" strokeWidth="1.400"><circle cx="12" cy="12" r="11" fill="#1c1a1c" /><path d="M9.500 4c-1.500 4 0 7 3.500 8.500M12.500 12.500c2.500-3 6-3 8 .5M12.800 12c0 4-2.500 6.500-7 5.500" /></g>,
  qgis: <QLogo />,
  people: <g fill="none" stroke="#fff" strokeWidth="2"><ellipse cx="8" cy="11" rx="3.500" ry="4" /><path d="M2 23c0-5 2.500-8 6-8s6 3 6 8" /><ellipse cx="17" cy="5" rx="3.500" ry="4" /><path d="M13 11c5-4 10 0 10 6" /></g>,
  battery: <path d="M7 7h15v11H4v-7M22 10.500h1.500v4H22M2 2v3M5 2v3M1 5h5.500v3H5v3H2.500V8H1zM4 11v3" fill="none" stroke="#fff" strokeWidth="1.300" />,
  wifi: <g fill="none" stroke="#fff" strokeWidth="1.500"><circle cx="18.500" cy="19" r="1" fill="#fff" /><path d="M13 20a7 7 0 0 1 7-7M9 20A11 11 0 0 1 20 9" /><path d="M5 20A15 15 0 0 1 20 5M1 20A19 19 0 0 1 20 1.500" opacity=".45" /></g>,
  volume: <path d="M2 9h4l5-5v16l-5-5H2zM14 9c2 2 2 4 0 6M17 6.500c4 4 4 7 0 11M20 4c6 5.500 6 10.500 0 16" fill="none" stroke="#fff" strokeWidth="1.500" />,
  action2: <g><path d="M1 1h22v18H14l-5 5v-5H1z" fill="#fff" /><path d="M5 6h14M5 10h14M5 14h12" stroke="#1b0808" strokeWidth="1.400" /></g>,
};

const Icon = ({ n, s = 24 }: { n: string; s?: number }) => (
  <svg width={s} height={s} viewBox="0 0 24 24">{icons[n]}</svg>
);

/* ---------- explorer ---------- */

const Screen = styled.div`
  position: relative; width: 1920px; height: 1080px; overflow: hidden;
  display: flex; flex-direction: column; background: #fff; font: 14px/20px ${ui}; color: #000;
`;
const Explorer = styled.div`height: 1030px; display: flex; flex-direction: column;`;
const TitleBar = styled.div`
  height: 29px; flex: none; display: flex; align-items: center; padding-left: 0; color: #999; letter-spacing: -.2px;
`;
const Cell = styled.div<{ $w: number; $j?: string }>`
  width: ${p => p.$w}px; flex: none; display: flex; align-items: center; justify-content: ${p => p.$j || "center"}; white-space: nowrap;
`;
const VRule = styled.i<{ $h: number; $c: string }>`width: 1px; height: ${p => p.$h}px; background: ${p => p.$c}; flex: none;`;
const Grow = styled.div`flex: 1;`;
const Tabs = styled.div`
  height: 29px; flex: none; display: flex; align-items: center; border-bottom: 1px solid #dadbdc; color: #444; font-size: 13.5px; letter-spacing: -.2px;
`;
const FileTab = styled.div`width: 70px; height: 28px; background: #1979ca; color: #fff; text-align: center; line-height: 29px; margin-right: 16px; padding-right: 1px;`;
const Tab = styled.div<{ $w: number }>`width: ${p => p.$w}px;`;
const HelpDot = styled.div`width: 18px; height: 18px; border-radius: 50%; background: #0a75d4; box-shadow: inset 0 0 0 1px #0d5ca6; color: #fff; font-weight: 700; font-size: 13px; line-height: 18px; text-align: center; margin: 0 4px 0 11px;`;
const AddressRow = styled.div`height: 47px; flex: none; display: flex; align-items: flex-start; padding: 7px 12px 0 0;`;
const NavButtons = styled.div`width: 125px; height: 28px; margin-right: 9px; svg { margin-top: 1px; }`;
const AddressBox = styled.div`
  width: 1509px; height: 28px; border: 1px solid #d9d9d9; display: flex; align-items: center; padding-left: 1px; letter-spacing: -.1px; margin-right: 12px;
`;
const SearchBox = styled.div`flex: 1; height: 28px; border: 1px solid #d9d9d9; display: flex; align-items: center; justify-content: flex-end; padding-right: 10px;`;
const ExplorerBody = styled.div`height: 896px; flex: none; display: flex;`;
const Nav = styled.div`width: 398px; border-right: 1px solid #f0f0f0; padding-top: 21px; overflow: hidden;`;
const NavRow = styled.div<{ $lvl: number; $sel?: boolean; $gap?: boolean }>`
  height: 30px; display: flex; align-items: center; gap: 5px; letter-spacing: ${p => (p.$lvl ? -.08 : .05)}px;
  padding-left: ${p => (p.$lvl ? 38 : 30)}px; margin-top: ${p => (p.$gap ? 10 : 0)}px;
  background: ${p => (p.$sel ? "#d9d9d9" : "none")};
`;
const Files = styled.div`flex: 1; display: flex; flex-direction: column; justify-content: flex-end; padding-left: 20px;`;
const FileRow = styled.div<{ $sel?: boolean }>`
  width: 717px; height: ${p => (p.$sel ? 28 : 27)}px; display: flex; align-items: center; letter-spacing: 0; color: #6d6d6d;
  background: ${p => (p.$sel ? "#d9d9d9" : "none")}; padding-left: 5px;
`;
const FileName = styled.span`width: 304px; padding-left: 5px; color: #000; letter-spacing: -.1px;`;
const FileCol = styled.span<{ $w: number }>`width: ${p => p.$w}px;`;
const FileSize = styled.span`flex: 1; text-align: right; padding-right: 5px;`;
const PageScroll = styled.div`
  width: 20px; height: 896px; background: #f0f0f0; display: flex; flex-direction: column; align-items: center;
  i { width: 19px; height: 718px; background: #cdcdcd; align-self: flex-start; }
`;
const ScrollEnd = styled.div<{ $h: number }>`height: ${p => p.$h}px; padding-top: 6px;`;
const ExplorerStatus = styled.div`flex: 1; display: flex; align-items: center; color: #1e395b; padding-left: 17px; letter-spacing: -.05px;`;
const ViewButton = styled.div`width: 28px; height: 29px; border: 1px solid #26a0da; background: #cbe8f6; display: grid; place-items: center;`;

const FolderMini = () => <svg width="14" height="18" viewBox="0 0 14 18"><path d="M1 1h11v14H1z" fill="#f1cf71" /><path d="M1 1l5 2v15l-5-2z" fill="#fde6a0" /><path d="M10 2h3v13h-3z" fill="#ffe492" /></svg>;
const Chevron = ({ d, c = "#555", w = 10, sw = 1.6 }: { d: "up" | "down" | "right"; c?: string; w?: number; sw?: number }) => (
  <svg width={w} height={w} viewBox="0 0 10 10"><path d={d === "up" ? "M1 7.500l4-4.500 4 4.500" : d === "down" ? "M1 2.500l4 4.500 4-4.500" : "M3 1l4 4-4 4"} fill="none" stroke={c} strokeWidth={sw} /></svg>
);
const Tri = ({ up, right, c = "#555", w = 10 }: { up?: boolean; right?: boolean; c?: string; w?: number }) => (
  <svg width={w} height={w} viewBox="0 0 10 10"><path d={right ? "M2.500 0l5 5-5 5z" : up ? "M0 7.500l5-5 5 5z" : "M0 2.500h10l-5 5z"} fill={c} /></svg>
);
const WinGlyphs = ({ c, max }: { c: string; max?: boolean }) => (
  <svg width="130" height="14" viewBox="0 0 130 14" fill="none" stroke={c}>
    <path d="M0 6.500h12" />
    {max ? <path d="M58.500 1.500h11v11h-11z" /> : <path d="M58.500 3.500h9v9h-9zM60.500 3.500v-2h9v9h-2" />}
    <path d="M117 1l12 12M129 1l-12 12" />
  </svg>
);

type NavItem = [string, string, number, boolean?, boolean?];
const navItems: NavItem[] = [
  ["quick", "Quick access", 0], ["desktopF", "Desktop", 1], ["downloads", "Downloads", 1], ["documents", "Documents", 1],
  ["pictures", "Pictures", 1], ["disk", "SD", 1], ["folder", "arya", 1], ["folder", "Proposal Proyek 2", 1], ["folder", "sap", 1],
  ["folder", "Screenshots", 1], ["creative", "Creative Cloud Files", 0, true], ["onedrive", "OneDrive", 0, true], ["pc", "This PC", 0, true],
  ["objects3d", "3D Objects", 1], ["desktopF", "Desktop", 1], ["documents", "Documents", 1, false, true], ["downloads", "Downloads", 1],
  ["music", "Music", 1], ["pictures", "Pictures", 1], ["videos", "Videos", 1], ["diskOs", "OS (C:)", 1], ["disk", "New Volume (D:)", 1],
  ["network", "Network", 0, true],
];

/* ---------- QGIS ---------- */

const Window = styled.div`
  position: absolute; left: 263px; top: 67px; width: 1538px; height: 863px; background: #efefef;
  border: 1px solid #1b80d2; box-shadow: 0 5px 20px 1px rgba(0,0,0,.33); display: flex; flex-direction: column;
`;
const WinTitle = styled.div`height: 37px; flex: none; background: #fff; display: flex; align-items: center; padding: 0 23px 0 9px; gap: 5px; letter-spacing: .1px; svg:last-child { margin-top: -2px; }`;
const MenuBar = styled.div`height: 25px; flex: none; display: flex; align-items: center; border-bottom: 1px solid #d3d3d3; padding: 2px 0 0 11px; letter-spacing: -.05px; u { text-underline-offset: 3px; text-decoration-thickness: 1px; }`;
const MenuItem = styled.div<{ $w: number }>`width: ${p => p.$w}px; flex: none; white-space: nowrap;`;
const ToolBar = styled.div<{ $b: number }>`
  height: ${p => 38 + p.$b}px; flex: none; display: flex; align-items: center; background: linear-gradient(#fafafa, #eeeeee);
  border-bottom: ${p => p.$b}px solid #b5b5b5;
`;
const Tool = styled.div<{ $w: number; $on?: boolean; $dim?: boolean }>`
  width: ${p => p.$w}px; height: 32px; flex: none; display: grid; place-items: center;
  svg { ${p => p.$dim && css`opacity: .27; filter: grayscale(.6);`} }
  ${p => p.$on && css`background: #dcdcdc; border: 1px solid #b4b4b4; border-radius: 3px;`}
`;
const Handle = styled.div<{ $w: number }>`
  width: ${p => p.$w}px; height: 17px; flex: none; display: flex; justify-content: flex-end; padding-right: 4px;
  i { width: 5px; background: radial-gradient(circle at 1px 1px, #b8b8b8 .8px, transparent 1px) 0 0 / 3px 3px; }
`;
const Main = styled.div`flex: 1; display: flex; min-height: 0;`;
const Docks = styled.div`width: 301px; flex: none; display: flex; flex-direction: column;`;
const DockTitle = styled.div`height: 20px; flex: none; display: flex; align-items: center; padding: 0 9px 0 4px; gap: 3px; letter-spacing: -.05px;`;
const DockTools = styled.div`height: 29px; flex: none; display: flex; align-items: center; padding: 0 0 3px 3px;`;
const List = styled.div<{ $h: number }>`
  width: 294px; height: ${p => p.$h}px; flex: none; display: flex; background: #fff; border: 1px solid #b3b3b3; border-left-color: #ddd;
`;
const Rows = styled.div<{ $pt: number }>`flex: 1; overflow: hidden; padding-top: ${p => p.$pt}px; letter-spacing: 0;`;
const TreeRow = styled.div`height: 22px; display: flex; align-items: center; padding-left: 8px;`;
const TreeText = styled.span`padding-left: 6px;`;
const Splitter = styled.div`height: 8px; flex: none; display: flex; justify-content: center; align-items: center; i { width: 17px; height: 2px; margin-left: -5px; background: radial-gradient(circle at 1px 1px, #c4c4c4 .8px, transparent 1px) 0 0 / 3px 3px; }`;
const Scroll = styled.div`
  width: 17px; flex: none; border-left: 1px solid #b3b3b3; background: linear-gradient(90deg, #f2f2f2, #fff); display: flex; flex-direction: column;
`;
const ScrollBtn = styled.div<{ $b?: boolean }>`height: 17px; display: grid; place-items: center; background: #fbfbfb; border: 0 solid #b3b3b3; border-${p => (p.$b ? "top" : "bottom")}-width: 1px;`;
const ScrollThumb = styled.div<{ $h: number }>`height: ${p => p.$h}px; background: #e3e3e3; border-top: 1px solid #b3b3b3;`;
const LayerRow = styled.div<{ $sel?: boolean }>`
  height: 22px; display: flex; align-items: center; padding-left: 28px; font-weight: 700; letter-spacing: .4px;
  ${p => p.$sel ? css`background: #f0f0f0; color: #000; text-decoration: underline;` : css`color: #808080; font-style: italic;`}
`;
const Check = styled.div`width: 17px; height: 17px; flex: none; border: 1px solid #b9b9b9; background: #fff; display: grid; place-items: center;`;
const Swatch = styled.div<{ $c: string; $k: string }>`
  flex: none; margin: 0 6px 0 6px; background: ${p => p.$c}; border: 1px solid rgba(35,35,35,.75); width: 19px; height: 19px;
  ${p => p.$k === "line" && css`height: 1px; border: 0;`}
  ${p => p.$k === "dot" && css`width: 11px; height: 11px; border-radius: 50%; margin: 0 10px 0 10px; border-width: 1.2px;`}
`;
const MapView = styled.div`flex: 1; background: #fff; border: 1px solid #b3b3b3; border-top: 0; svg { display: block; }`;
const Status = styled.div`height: 32px; flex: none; display: flex; align-items: center; font: 12.300px/18px ${small}; padding: 1px 0 0 4px;`;
const Field = styled.div<{ $w: number; $h?: number }>`
  width: ${p => p.$w}px; height: ${p => p.$h || 24}px; flex: none; background: #fff; border: 1px solid #b1b1b1; border-radius: 3px; display: flex; align-items: center; overflow: hidden;
`;
const Label = styled.div<{ $w: number; $c?: string; $s?: number }>`width: ${p => p.$w}px; flex: none; white-space: nowrap; color: ${p => p.$c || "#000"}; padding-top: 1px; letter-spacing: ${p => p.$s || 0}px;`;
const Spin = styled.div`width: 17px; height: 100%; border-left: 1px solid #b1b1b1; display: flex; flex-direction: column; align-items: center; justify-content: center; gap: 1px;`;
const Grip = styled.div`width: 11px; height: 12px; align-self: flex-end; margin-left: 18px; background: radial-gradient(circle at 1px 1px, #bbb .8px, transparent 1px) 0 0 / 3px 3px; clip-path: polygon(100% 0, 100% 100%, 0 100%);`;

const menus: [string, string, string, number][] = [
  ["Pro", "j", "ect", 61], ["", "E", "dit", 41], ["", "V", "iew", 47], ["", "L", "ayer", 50], ["", "S", "ettings", 68], ["", "P", "lugins", 62],
  ["Vect", "o", "r", 57], ["", "R", "aster", 56], ["", "D", "atabase", 77], ["", "W", "eb", 46], ["", "M", "esh", 50], ["Pro", "c", "essing", 85], ["", "H", "elp", 40],
];

/* "|w" is a grip, "vw" a drop-down arrow ("^w" when disabled), "-w" a separator; "~" marks a disabled tool, "*" the active one */
const bar1 = "|14 newp open save layout wrench style |18.5 *hand panto zoomin zoomout zoomfull zoomsel zoomlay ~native zoomlast ~zoomnext book1 book2 book3 refresh |17 identify ~action ^15 select v15 selval v15.5 deselect table abacus gear sigma measure v14.5 tip textann v14".split(" ");
const bar2 = "|14 addlayer geopackS shape featherS chip -7 virtual |19.5 ~pencils pencil ~saveed ~addfeat ~vertex g14 ~multi ~trash ~cut ~copy ~paste ~undo ~redo |17 abc diagram abpin ~abpinG ~abeye ~abmove ~abrot ~abedit |18.5 metasearch |19 python |17 help |20".split(" ");

const Tools = ({ items }: { items: string[] }) => (
  <>
    {items.map((t, i) => {
      const rest = t.slice(1);
      const n = parseFloat(rest);
      if (t[0] === "|") return <Handle key={i} $w={n}><i /></Handle>;
      if ("v^g".includes(t[0]) && !isNaN(n)) return <Tool key={i} $w={n}><Tri c={t[0] === "^" ? "#a5a5a5" : t[0] === "g" ? "#8a8a8a" : "#555"} /></Tool>;
      if (t[0] === "-") return <Cell key={i} $w={n}><VRule $h={20} $c="#d0d0d0" /></Cell>;
      const mark = t[0] === "~" || t[0] === "*";
      return <Tool key={i} $w={33.050} $dim={t[0] === "~"} $on={t[0] === "*"}><Icon n={mark ? rest : t} /></Tool>;
    })}
  </>
);

const DockButtons = () => (
  <svg width="25" height="11" viewBox="0 0 25 11" fill="none" stroke="#666">
    <rect x=".5" y=".5" width="10" height="10" rx="2" /><path d="M4.500 2.500h4v4h-4zM2.500 4.500h4v4h-4z" />
    <rect x="14.500" y=".5" width="10" height="10" rx="2" /><path d="M17 3l5 5M22 3l-5 5" strokeWidth="1.800" />
  </svg>
);

const tree: [string, string, boolean?][] = [
  ["fav", "Favorites"], ["home", "Home", true], ["gfolder", "C:\\", true], ["gfolder", "D:\\", true], ["geopack", "GeoPackage"], ["feather", "SpatiaLite"],
  ["postgis", "PostGIS"], ["mssql", "MSSQL"], ["oracle", "Oracle"], ["db2", "DB2"], ["globe", "WMS/WMTS"], ["globe", "XYZ Tiles", true], ["wcs", "WCS"], ["wfs", "WFS"], ["ows", "OWS"],
];
const layers: [string, string, string, boolean?][] = [
  ["Nomor10", "#e5b636", "box"], ["Nomor9", "#c43c39", "box"], ["Nomor8", "#beb297", "box"], ["Nomor7", "#91522d", "box"], ["Nomor10", "#6b7bc4", "box", true],
  ["Nomor6", "#7d8b8f", "box"], ["Nomor5", "#85b66f", "line"], ["Nomor4", "#a47158", "dot"], ["Nomor3", "#d5b43c", "dot"], ["Nomor2", "#6f9e6f", "dot"],
  ["Nomor2", "#f3a6b2", "dot"], ["Nomor1", "#e77190", "dot"],
];
const CheckMark = () => <svg width="12" height="12" viewBox="0 0 12 12"><path d="M1.500 6.500L4.500 10.500 10 1" fill="none" stroke="#000" strokeWidth="2" /></svg>;

/* Each feature: grid vertices of the fill, then of the visible outline. */
const features: [number[][], number[][]][] = [
  [[[1, 10], [2, 10], [3, 8]], [[0, 10], [2, 10], [3, 8], [1, 10]]],
  [[[0, 3], [5, 4], [8, 9], [8, 4], [6, 5]], [[6, 2], [6, 5], [0, 3], [5, 4], [8, 9]]],
  [[[10, 6], [11, 6], [12, 4], [13, 4], [5, 6]], [[10, 6], [11, 6], [12, 4], [13, 4], [5, 6]]],
  [[[7, 2], [8, 1], [9, 4], [4, 9], [7, 3]], [[7, 2], [8, 1], [9, 4], [4, 9], [7, 3]]],
  [[[10, 1], [10, 0], [4, 7], [7, 7], [1, 8]], [[10, 1], [10, 0], [4, 7], [7, 7], [1, 8]]],
];
const pts = (v: number[][]) => v.map(([x, y]) => `${(313 + 41.650 * x).toFixed(2)},${(101.700 + 41.640 * y).toFixed(2)}`).join(" ");
const MapDrawing = () => (
  <svg width="1232" height="686" viewBox="0 0 1232 686">
    {features.map(([f, s], i) => (
      <g key={i}>
        <polygon points={pts(f)} fill="#987db7" />
        <polyline points={pts(s)} fill="none" stroke="#232323" strokeWidth="1.100" strokeLinejoin="bevel" />
      </g>
    ))}
  </svg>
);

/* ---------- taskbar ---------- */

const Taskbar = styled.div`
  height: 50px; flex: none; display: flex; color: #fff;
  background: linear-gradient(90deg, #1b0a1e 0, #200e22 35%, #220c1c 46%, #160507 58%, #1c0607 80%, #2a0906 100%);
`;
const AppButton = styled.div<{ $w: number; $run?: boolean; $on?: boolean }>`
  width: ${p => p.$w}px; flex: none; display: grid; place-items: center; margin-right: ${p => (p.$w > 60 ? 1 : 0)}px;
  background: ${p => (p.$on ? "#4a3a3f" : "none")};
  ${p => p.$run && css`background-image: linear-gradient(#76b9ed, #76b9ed); background-repeat: no-repeat; background-position: bottom; background-size: ${p.$on ? "100%" : "51px"} 3px;`}
`;
const Clock = styled.div`width: 92px; text-align: center; line-height: 23px; padding-top: 2px; font-size: 14px; letter-spacing: -.1px;`;
const Notice = styled.div`width: 61px; position: relative; display: flex; padding: 15px 0 0 15px; border-right: 1px solid #6a5450; margin-right: 5px;`;
const Badge = styled.div`position: absolute; left: 24px; top: 24px; width: 22px; height: 22px; border-radius: 50%; background: #403a3c; border: 1px solid #777; font-size: 12.500px; line-height: 20px; text-align: center; font-weight: 600;`;

const apps: [string, number, number][] = [
  ["store", 0, 30], ["gift", 0, 30], ["mail", 0, 30], ["explorer", 1, 29], ["filmora", 0, 30], ["opera", 0, 28], ["chrome", 0, 29], ["edge", 0, 29], ["line", 0, 30],
  ["poweriso", 0, 29], ["notes", 0, 28], ["spyder", 1, 29], ["cmd", 1, 29], ["obs", 1, 29], ["qgis", 2, 29],
];

export default function App() {
  return (
    <Screen>
      <GlobalStyle />
      <Explorer>
        <TitleBar>
          <Cell $w={18}><FolderMini /></Cell>
          <Cell $w={16}><VRule $h={16} $c="#8c8c8c" /></Cell>
          <Cell $w={29}><Icon n="checkdoc" s={20} /></Cell>
          <Cell $w={22}><FolderMini /></Cell>
          <Cell $w={22}><svg width="8" height="7" viewBox="0 0 8 7"><path d="M0 .500h7" stroke="#000" /><path d="M0 3h7L3.500 6.500z" /></svg></Cell>
          <Cell $w={14}><VRule $h={16} $c="#8c8c8c" /></Cell>
          <span>sap</span>
          <Grow /><WinGlyphs c="#999" /><Cell $w={25} />
        </TitleBar>
        <Tabs>
          <FileTab>File</FileTab><Tab $w={70}>Home</Tab><Tab $w={68}>Share</Tab><Tab $w={50}>View</Tab>
          <Grow /><Chevron d="down" c="#999" w={14} sw={1} /><HelpDot>?</HelpDot>
        </Tabs>
        <AddressRow>
          <NavButtons>
            <svg width="125" height="28" viewBox="0 0 125 28" fill="none" strokeWidth="1.800">
              <path d="M31 14H17M22.500 8.500L17 14l5.500 5.500" stroke="#6e6e6e" />
              <path d="M55 14h14M63.500 8.500L69 14l-5.500 5.500" stroke="#dcdcdc" />
              <path d="M89 12l3.500 3.500L96 12" stroke="#7c7c7c" />
              <path d="M118 21V8.500M112 14.500l6-6.500 6 6.500" stroke="#6e6e6e" />
            </svg>
          </NavButtons>
          <AddressBox>
            <Cell $w={20}><FolderMini /></Cell>
            <Cell $w={26}><Chevron d="right" /></Cell>
            <span>This PC</span>
            <Cell $w={27}><Chevron d="right" /></Cell>
            <span>Documents</span>
          </AddressBox>
          <SearchBox><svg width="15" height="15" viewBox="0 0 15 15"><circle cx="10" cy="5" r="3.700" fill="none" stroke="#6e6e6e" strokeWidth="1.700" /><path d="M7 8l-6 6" stroke="#6e6e6e" strokeWidth="1.900" /></svg></SearchBox>
        </AddressRow>
        <ExplorerBody>
          <Nav>
            {navItems.map(([ic, t, l, gap, sel], i) => (
              <NavRow key={i} $lvl={l} $gap={gap} $sel={sel}><Icon n={ic} s={l ? 22 : 20} /><span>{t}</span></NavRow>
            ))}
          </Nav>
          <Files>
            {["dbf", "shp", "shx"].map(e => (
              <FileRow key={e} $sel={e === "shp"}>
                <Icon n="file" s={20} /><FileName>Nomor10.{e}</FileName><FileCol $w={150}>21/10/2019 17:58</FileCol><FileCol $w={120}>{e.toUpperCase()} File</FileCol><FileSize>1 KB</FileSize>
              </FileRow>
            ))}
          </Files>
          <PageScroll><ScrollEnd $h={157}><Chevron d="up" sw={2.2} /></ScrollEnd><i /><ScrollEnd $h={21}><Chevron d="down" sw={2.2} /></ScrollEnd></PageScroll>
        </ExplorerBody>
        <ExplorerStatus>
          <Cell $w={68} $j="flex-start">38 items</Cell><VRule $h={14} $c="#e3e3e3" /><Cell $w={12} />
          <Cell $w={109} $j="flex-start">1 item selected</Cell><Cell $w={75} $j="flex-start">916 bytes</Cell><VRule $h={14} $c="#e3e3e3" />
          <Grow />
          <ViewButton>
            <svg width="18" height="16" viewBox="0 0 18 16"><path d="M.5.500h4v4h-4zM.5 5.500h4v4h-4zM.5 10.500h4v4h-4z" fill="#fff" stroke="#888" /><path d="M7 2.500h5M13 2.500h5M7 7.500h5M13 7.500h5M7 12.500h5M13 12.500h5" stroke="#777" /><path d="M2 2h1.500v1.500H2z" fill="#26a" /><path d="M2 7h1.500v1.500H2z" fill="#a73" /><path d="M2 12h1.500v1.500H2z" fill="#c22" /></svg>
          </ViewButton>
          <Cell $w={33} $j="flex-start"><svg width="24" height="14" viewBox="0 0 24 14"><path d="M5.500.500h17v13h-17z" fill="#fff" stroke="#999" /><path d="M7 2h14v6H7z" fill="#76b5ea" /><path d="M7 5l6 2 8 1v4H7z" fill="#2f6d68" /><path d="M7 9.500l14-1V12H7z" fill="#3d83bd" /></svg></Cell>
        </ExplorerStatus>
      </Explorer>

      <Window>
        <WinTitle><Icon n="qgis" s={20} /><span>*Untitled Project - QGIS</span><Grow /><WinGlyphs c="#000" max /></WinTitle>
        <MenuBar>{menus.map(([a, b, c, w]) => <MenuItem key={a + b + c} $w={w}>{a}<u>{b}</u>{c}</MenuItem>)}</MenuBar>
        <ToolBar $b={1}><Tools items={bar1} /></ToolBar>
        <ToolBar $b={2}><Tools items={bar2} /></ToolBar>
        <Main>
          <Docks>
            <DockTitle><span>Browser</span><Grow /><DockButtons /></DockTitle>
            <DockTools>{["addSel", "refresh", "funnel", "treeUp", "info"].map(n => <Cell key={n} $w={25}><Icon n={n} s={15} /></Cell>)}</DockTools>
            <List $h={326}>
              <Rows $pt={0.5}>
                {tree.map(([ic, t, open]) => (
                  <TreeRow key={t}><Cell $w={20} $j="flex-start">{open && <Tri right c="#555" w={9} />}</Cell><Icon n={ic} s={20} /><TreeText>{t}</TreeText></TreeRow>
                ))}
              </Rows>
              <Scroll><ScrollBtn><Tri up /></ScrollBtn><Grow /><ScrollThumb $h={65} /><ScrollBtn $b><Tri /></ScrollBtn></Scroll>
            </List>
            <Splitter><i /></Splitter>
            <DockTitle><span>Layers</span><Grow /><DockButtons /></DockTitle>
            <DockTools>
              {["brush", "addGroup", "eye", "funnel", "eps"].map(n => <Cell key={n} $w={25.200}><Icon n={n} s={15} /></Cell>)}
              <Cell $w={12}><Tri w={9} /></Cell><Cell $w={3} />
              {["treeDown", "treeUp", "removeL"].map(n => <Cell key={n} $w={25}><Icon n={n} s={15} /></Cell>)}
            </DockTools>
            <List $h={256}>
              <Rows $pt={0}>
                {layers.map(([t, c, k, on], i) => (
                  <LayerRow key={i} $sel={on}><Check>{on && <CheckMark />}</Check><Swatch $c={c} $k={k} />{t}</LayerRow>
                ))}
              </Rows>
              <Scroll><ScrollBtn><Tri up /></ScrollBtn><Grow /><ScrollThumb $h={9} /><ScrollBtn $b><Tri /></ScrollBtn></Scroll>
            </List>
          </Docks>
          <MapView><MapDrawing /></MapView>
        </Main>
        <Status>
          <Field $w={234}><Cell $w={28}><Icon n="lens" s={13} /></Cell><Label $w={190} $c="#7a7a7a" $s={-0.05}>Type to locate (Ctrl+K)</Label></Field>
          <Cell $w={8} /><Label $w={386} $s={0.14}>1 legend entries removed.</Label>
          <Label $w={65} $s={0.1}>Coordinate</Label>
          <Field $w={88}><Cell $w={86}>17.08,5.28</Cell></Field>
          <Cell $w={30}><Icon n="track" s={21} /></Cell><Cell $w={8} />
          <Label $w={34}>Scale</Label>
          <Field $w={93}><Label $w={70}>.:11818323</Label><Tri /></Field>
          <Cell $w={37}><Icon n="lock" s={20} /></Cell>
          <Label $w={56}>Magnifier</Label>
          <Field $w={93}><Cell $w={5} /><Label $w={69}>100%</Label><Spin><Tri up w={9} /><Tri w={9} /></Spin></Field>
          <Cell $w={9} /><Label $w={56}>Rotation</Label>
          <Field $w={89}><Cell $w={5} /><Label $w={65}>0,0 °</Label><Spin><Tri up w={9} /><Tri w={9} /></Spin></Field>
          <Cell $w={6} /><Check><CheckMark /></Check><Cell $w={6} /><Label $w={58} $s={0.15}>Render</Label>
          <Icon n="crs" s={19} /><Cell $w={5} /><Label $w={84} $s={0.15}>EPSG:4326</Label>
          <Icon n="bubble" s={20} /><Grip />
        </Status>
      </Window>

      <Taskbar>
        {["win", "tsearch", "tview"].map(n => <AppButton key={n} $w={60}><Icon n={n} s={22} /></AppButton>)}
        <Cell $w={3} />
        {apps.map(([n, r, s]) => <AppButton key={n} $w={61.050} $run={r > 0} $on={r === 2}><Icon n={n} s={s} /></AppButton>)}
        <Grow />
        <Cell $w={45}><Icon n="people" s={19} /></Cell>
        <Cell $w={45}><Chevron d="up" c="#fff" w={18} sw={0.9} /></Cell>
        <Cell $w={17}><Icon n="battery" s={19} /></Cell>
        <Cell $w={44}><Icon n="wifi" s={17} /></Cell>
        <Cell $w={14}><Icon n="volume" s={20} /></Cell>
        <Cell $w={8} />
        <Clock>17:59<br />21/10/2019</Clock>
        <Notice><Icon n="action2" s={21} /><Badge>10</Badge></Notice>
      </Taskbar>
    </Screen>
  );
}
